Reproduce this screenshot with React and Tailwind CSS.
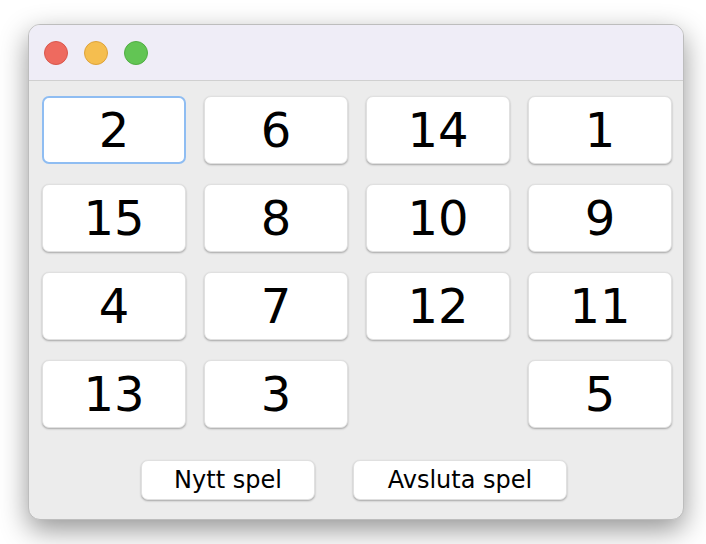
const tiles = [2, 6, 14, 1, 15, 8, 10, 9, 4, 7, 12, 11, 13, 3, null, 5];

export default function App() {
  return (
    <div className="w-[706px] h-[544px] bg-white pt-[24px] pl-[28px] font-['DejaVu_Sans',sans-serif]">
      <div className="w-[656px] h-[496px] rounded-[12px] border border-[#bdbdbd] bg-[#ececec] overflow-hidden shadow-[0_10px_28px_rgba(0,0,0,0.42)] flex flex-col">
        <div className="h-[56px] bg-[#efedf7] border-b border-[#d0d0d0] flex items-center gap-[16px] pl-[15px] shrink-0">
          <span className="w-[24px] h-[24px] rounded-full bg-[#ee6a5f] border border-[#d9574c]" />
          <span className="w-[24px] h-[24px] rounded-full bg-[#f5be4f] border border-[#dea33a]" />
          <span className="w-[24px] h-[24px] rounded-full bg-[#62c554] border border-[#50ad43]" />
        </div>
        <div className="grid grid-cols-[repeat(4,144px)] gap-x-[18px] gap-y-[20px] pl-[13px] pt-[15px]">
          {tiles.map((n, i) =>
            n === null ? (
              <div key={i} className="h-[68px]" />
            ) : (
              <button
                key={i}
                className={
                  i === 0
                    ? "h-[68px] rounded-[7px] bg-white border-2 border-[#8fbdf2] text-[48px] text-black flex items-center justify-center"
                    : "h-[68px] rounded-[7px] bg-white shadow-[0_1px_2px_rgba(0,0,0,0.3)] border border-[#e0e0e0] text-[48px] text-black flex items-center justify-center"
                }
              >
                {n}
              </button>
            )
          )}
        </div>
        <div className="flex justify-center gap-[38px] mt-[32px] pr-[4px]">
          <button className="w-[174px] h-[40px] rounded-[7px] bg-white border border-[#e0e0e0] shadow-[0_1px_2px_rgba(0,0,0,0.3)] text-[24px] text-black">
            Nytt spel
          </button>
          <button className="w-[214px] h-[40px] rounded-[7px] bg-white border border-[#e0e0e0] shadow-[0_1px_2px_rgba(0,0,0,0.3)] text-[24px] text-black">
            Avsluta spel
          </button>
        </div>
      </div>
    </div>
  );
}
